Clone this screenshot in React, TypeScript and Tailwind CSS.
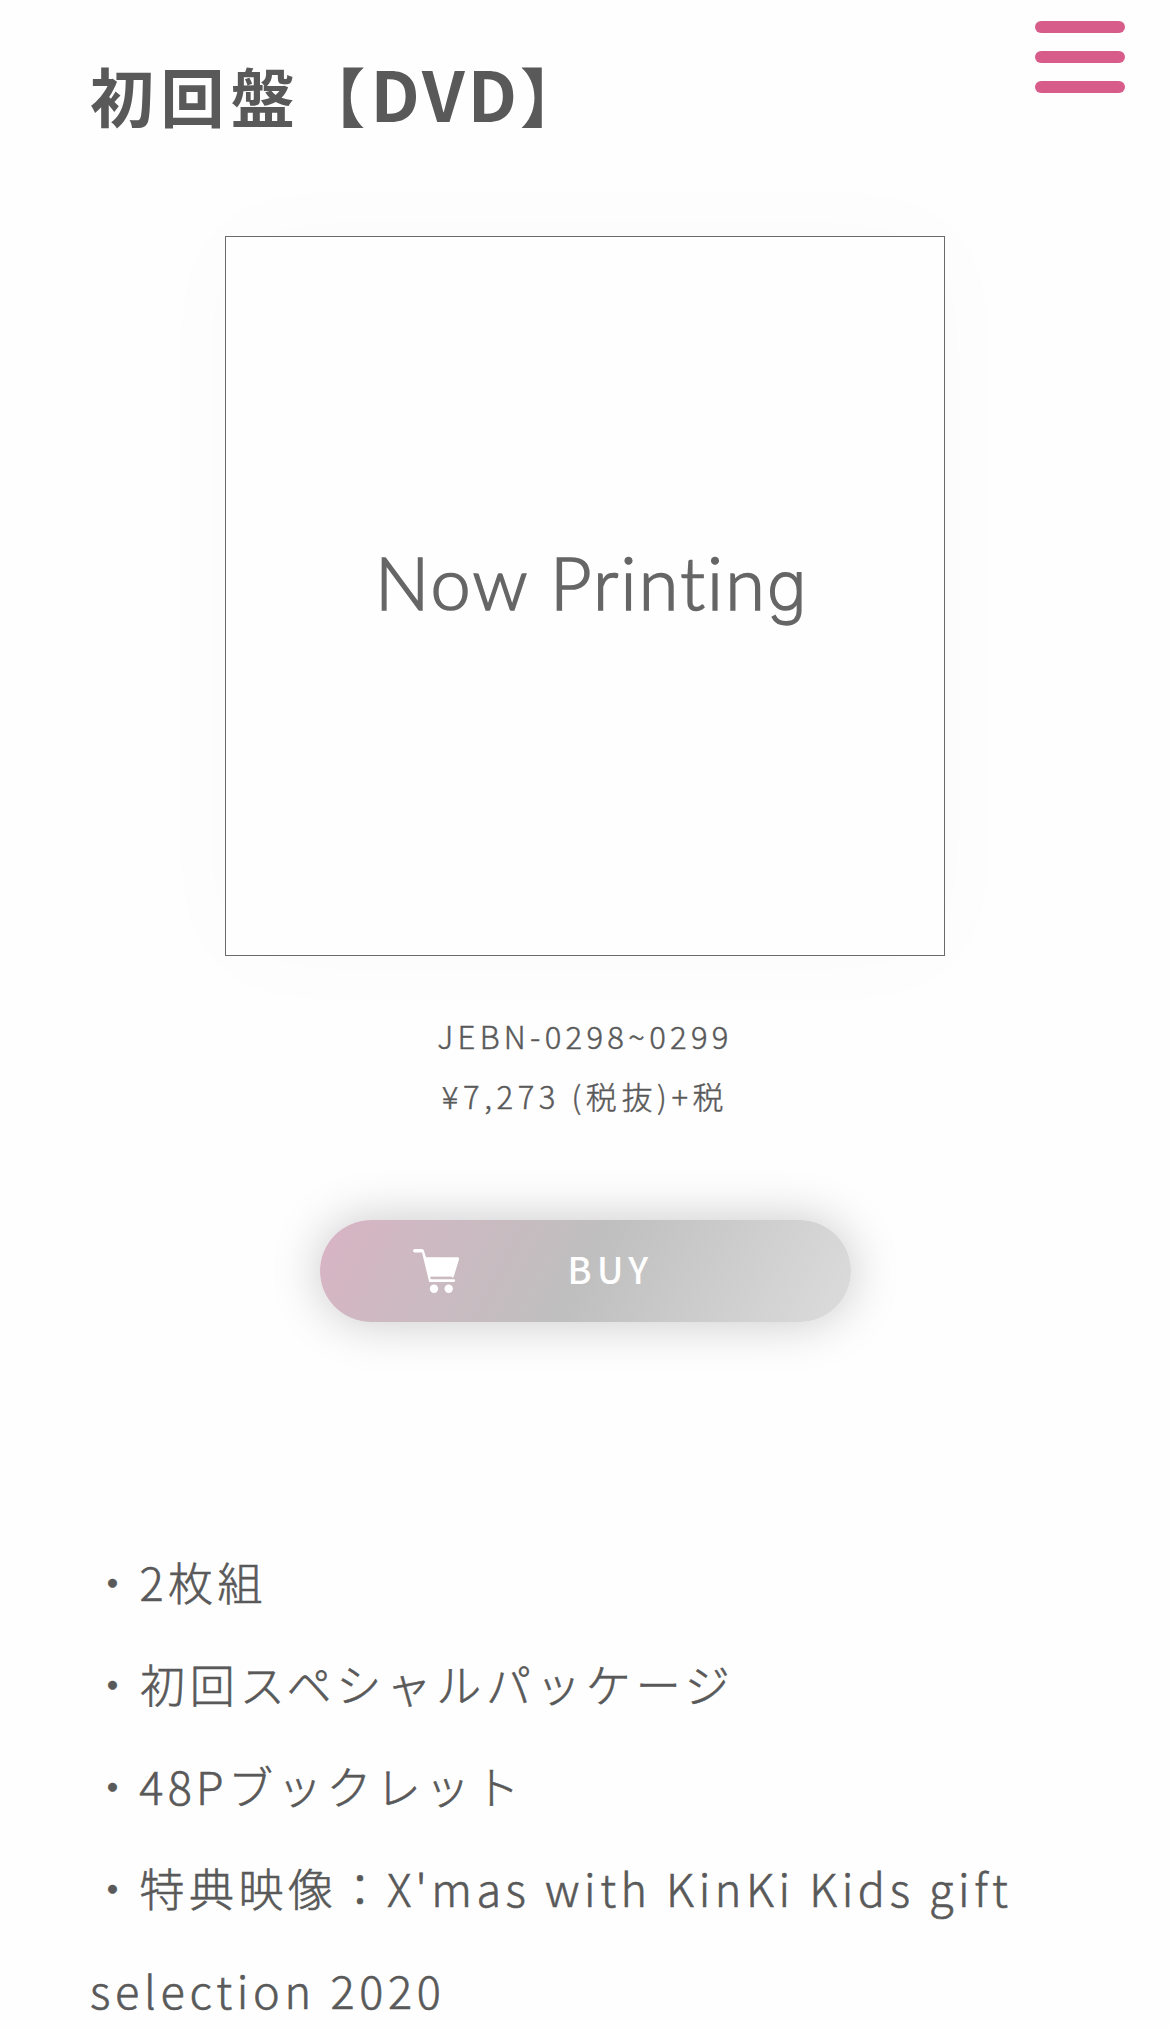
function Cart() {
  return (
    <svg className="h-[44px] w-[46px]" viewBox="0 0 46 44" fill="#fff">
      <path d="M1.8 0H9Q10.4 0 10.9 1.6L13 8.3H44.5Q46.6 8.3 46 10.2L41 27Q40.4 29 38.5 29H17.6L18.2 30.2H40.5Q42.2 30.2 42.2 31.6T40.5 33H16.2L9 3.5H1.8Q0 3.5 0 1.8T1.8 0Z" />
      <circle cx="21" cy="39.7" r="4.2" />
      <circle cx="35.7" cy="39.7" r="4.2" />
      <path d="M17.4 28.6H39" stroke="#cbbcc1" strokeWidth="2" />
    </svg>
  );
}

export default function App() {
  return (
    <main className="relative h-[2029px] w-[1170px] overflow-hidden bg-[#fefefe] font-['Noto_Sans_CJK_JP',sans-serif] text-[#595959]">
      <button aria-label="menu" className="absolute top-[21px] right-[45px] flex w-[90px] flex-col gap-[18px]">
        <span className="h-3 rounded-full bg-[#d75c89]" />
        <span className="h-3 rounded-full bg-[#d75c89]" />
        <span className="h-3 rounded-full bg-[#d75c89]" />
      </button>

      <h1 className="ml-[90px] h-[236px] pt-[44px] text-[64px] leading-[96px] font-bold tracking-[6.4px] whitespace-nowrap">
        初回盤【<span className="-ml-px text-[69px] tracking-[3px]">DVD</span>】
      </h1>

      <div className="mx-auto flex h-[720px] w-[720px] items-center justify-center border-[1.5px] border-[#6a6a6a] bg-[#fefefe] pb-[24px] pl-[14px] shadow-[0_0_100px_rgba(0,0,0,0.02)]">
        <span className="font-['Lato',sans-serif] text-[72px] leading-[90px] font-light tracking-[2.2px] whitespace-nowrap text-[#666] [-webkit-text-stroke:1.7px_#666] [font-variant-ligatures:none]">
          Now Printin<span className="font-['Inter',sans-serif] text-[67px] font-extralight [-webkit-text-stroke:1.9px_#666]">g</span>
        </span>
      </div>

      <div className="mt-[50px] text-center text-[31px] leading-[60px] font-light whitespace-nowrap [-webkit-text-stroke:0.45px_#595959]">
        <p className="tracking-[4.3px]">JEBN-0298~0299</p>
        <p className="tracking-[4.6px]">¥7,273 (税抜)+税</p>
      </div>

      <a className="mx-auto mt-[94px] flex h-[102px] w-[531px] items-center rounded-full bg-[linear-gradient(117deg,#d9b3c4_0%,#d0b8c2_15%,#bfbfbf_50%,#dcdcdc_100%)] pl-[93px] text-white shadow-[0_0_50px_rgba(0,0,0,0.22)]">
        <Cart />
        <span className="-mt-[6px] ml-[109px] text-[36px] leading-[50px] font-medium tracking-[5.5px]">BUY</span>
      </a>

      <div className="mt-[209px] ml-[90px] text-[45px] leading-[102px] font-light tracking-[4.5px] whitespace-nowrap [-webkit-text-stroke:0.6px_#595959]">
        <p>・2枚組</p>
        <p className="tracking-[4.9px]">・初回スペシャルパッケージ</p>
        <p className="tracking-[4.3px]">・48Pブックレット</p>
        <p>・特典映像：<span className="tracking-[4.55px]">X'mas with KinKi Kids gift</span></p>
        <p className="tracking-[4.7px]">selection 2020</p>
      </div>
    </main>
  );
}
